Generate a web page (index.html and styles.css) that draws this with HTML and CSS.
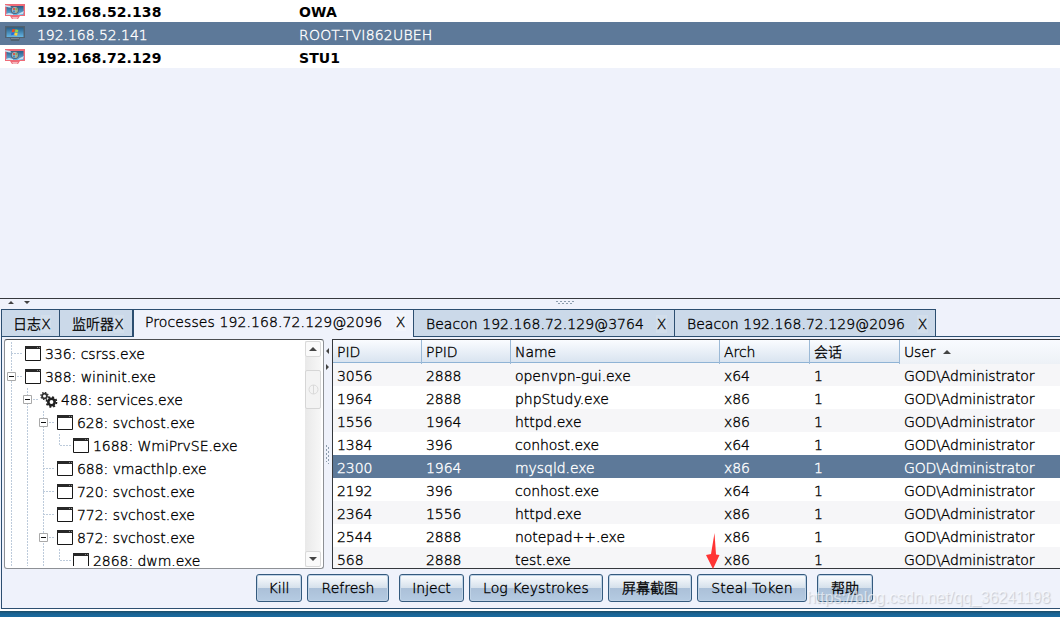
FILE: index.html
```html
<!DOCTYPE html>
<html lang="zh">
<head>
<meta charset="utf-8">
<title>Processes</title>
<link rel="stylesheet" href="styles.css">
</head>
<body>
<svg class="defs" width="0" height="0">
  <defs>
    <linearGradient id="sky" x1="0" y1="0" x2="0" y2="1"><stop offset="0" stop-color="#285d88"/><stop offset="1" stop-color="#65b5e3"/></linearGradient>
    <symbol id="owned" viewBox="0 0 20 16">
      <path d="M0 0h20v12h-5l-2 3H7l-2-3H0z" fill="#ee6b78"/>
      <path d="M7 13h6l-1 2H8z" fill="#f4b6bd"/>
      <path d="M1.500 2h17v9h-17z" fill="url(#sky)"/>
      <path d="M0 1l5 1 2 1.500-3 0-4-1zM19 7l-4 2-3 2 6-1zM1 10l3-1 4 1v1H1z" fill="#c9e2f2"/>
      <circle cx="9.800" cy="6" r="4.100" fill="#536579"/><circle cx="9.800" cy="6" r="3" fill="#a0b6c4"/>
      <path d="M8 4l2 0v2H8z" fill="#d75c4c"/><path d="M10.400 4h2v2h-2z" fill="#80a864"/><path d="M8 6.400h2v2H8z" fill="#408ac1"/><path d="M10.400 6.400h2v2h-2z" fill="#a9b07b"/>
    </symbol>
    <symbol id="windows" viewBox="0 0 20 16">
      <path d="M0 0h20v12h-5l-1 3H6l-1-3H0z" fill="#506170"/>
      <path d="M1.500 1.500h17v9.500h-17z" fill="url(#sky)"/>
      <path d="M6 12h8v1H6z" fill="#778591"/>
      <path d="M7.300 3.200L10 3l-.6 3-2.700.3z" fill="#f04b27"/><path d="M10.400 3.300l3 .7-.6 2.500-2.800-.5z" fill="#95d545"/><path d="M6.500 6.700L9.200 6.400l-.6 2.400-2.600.4z" fill="#2469dc"/><path d="M9.800 6.500l2.800.5-.6 2.700-2.700-.5z" fill="#ffd235"/>
    </symbol>
    <symbol id="win" viewBox="0 0 16 15">
      <path d="M.5.5h15v14H.5z" fill="#fff" stroke="#181818"/><path d="M0 0h16v3H0z" fill="#282828"/><path d="M12 1h1v1h-1zM14 1h1v1h-1z" fill="#888"/>
    </symbol>
    <symbol id="gears" viewBox="0 0 18 16">
      <circle cx="4.500" cy="4" r="2.400" fill="none" stroke="#333" stroke-width="1.800"/>
      <circle cx="4.500" cy="4" r="3.600" fill="none" stroke="#333" stroke-width="1.300" stroke-dasharray="1.400 1.430"/>
      <circle cx="11.500" cy="10" r="3.200" fill="none" stroke="#202020" stroke-width="2.600"/>
      <circle cx="11.500" cy="10" r="5" fill="none" stroke="#202020" stroke-width="1.700" stroke-dasharray="2 1.930"/>
    </symbol>
  </defs>
</svg>

<main class="app">
  <section class="targets">
    <div class="target owned"><svg><use href="#owned"/></svg><b>192.168.52.138</b><b>OWA</b></div>
    <div class="target selected"><svg><use href="#windows"/></svg><span>192.168.52.141</span><span class="host">ROOT-TVI862UBEH</span></div>
    <div class="target owned"><svg><use href="#owned"/></svg><b>192.168.72.129</b><b>STU1</b></div>
  </section>

  <div class="divider">
    <svg width="1060" height="10"><path d="M8 5h6l-3-3z M24 2h6l-3 3z" fill="#424242"/><path d="M556 2.500h18M558 4.500h15" stroke="#8c9dad" stroke-dasharray="2 2"/></svg>
  </div>

  <section class="workspace">
    <nav class="tabs">
      <div class="tab log cjk">日志<i>X</i></div>
      <div class="tab listen cjk">监听器<i>X</i></div>
      <div class="tab current"><span>Processes 192.168.72.129@2096</span><i>X</i></div>
      <div class="tab beacon"><span>Beacon 192.168.72.129@3764</span><i>X</i></div>
      <div class="tab beacon"><span>Beacon 192.168.72.129@2096</span><i>X</i></div>
      <div class="tab-fill"></div>
    </nav>

    <div class="panes">
      <div class="tree">
        <div class="nodes">
          <svg class="guides" width="100" height="227">
            <g fill="none" stroke="#bdcbdb" stroke-dasharray="2 1">
              <path d="M6.500 2V226M22.500 48V226M38.500 71V226M54.500 94v11M54.500 209v11"/>
              <path d="M6 13.500h11M6 36.500h11M22 59.500h11M38 82.500h11M55 105.500h11M38 128.500h11M38 151.500h11M38 174.500h11M38 197.500h11M55 220.500h11"/>
            </g>
            <g fill="#fff" stroke="#a9a9a9"><path d="M2.500 32.500h8v8h-8zM18.500 55.500h8v8h-8zM34.500 78.500h8v8h-8zM34.500 193.500h8v8h-8z"/></g>
            <path d="M4 36.500h5M20 59.500h5M36 82.500h5M36 197.500h5" stroke="#111"/>
          </svg>
          <div class="node d1"><svg><use href="#win"/></svg><span>336: csrss.exe</span></div>
          <div class="node d1"><svg><use href="#win"/></svg><span>388: wininit.exe</span></div>
          <div class="node d2 service"><svg><use href="#gears"/></svg><span>488: services.exe</span></div>
          <div class="node d3"><svg><use href="#win"/></svg><span>628: svchost.exe</span></div>
          <div class="node d4"><svg><use href="#win"/></svg><span>1688: WmiPrvSE.exe</span></div>
          <div class="node d3"><svg><use href="#win"/></svg><span>688: vmacthlp.exe</span></div>
          <div class="node d3"><svg><use href="#win"/></svg><span>720: svchost.exe</span></div>
          <div class="node d3"><svg><use href="#win"/></svg><span>772: svchost.exe</span></div>
          <div class="node d3"><svg><use href="#win"/></svg><span>872: svchost.exe</span></div>
          <div class="node d4"><svg><use href="#win"/></svg><span>2868: dwm.exe</span></div>
        </div>
        <div class="scroll">
          <div class="step"><svg width="8" height="4"><path d="M0 4h8L4 0z"/></svg></div>
          <div class="thumb"><svg width="11" height="11"><circle cx="5.500" cy="5.500" r="4.500"/><path d="M5.500 1v9"/></svg></div>
          <div class="step"><svg width="8" height="4"><path d="M0 0h8L4 4z"/></svg></div>
        </div>
      </div>
      <div class="splitter"><svg width="8" height="230"><path d="M5 9v6L2 12zM2 25v6l3-3z" fill="#424242"/><path d="M2.500 106v17M4.500 108v17" stroke="#8c9dad" stroke-dasharray="2 2"/></svg></div>
      <div class="processes">
        <div class="row head"><span>PID</span><span>PPID</span><span>Name</span><span>Arch</span><span class="cjk">会话</span><span>User<svg width="8" height="4"><path d="M0 4h8L4 0z" fill="#444"/></svg></span></div>
        <div class="row"><span>3056</span><span>2888</span><span>openvpn-gui.exe</span><span>x64</span><span>1</span><span>GOD\Administrator</span></div>
        <div class="row"><span>1964</span><span>2888</span><span>phpStudy.exe</span><span>x86</span><span>1</span><span>GOD\Administrator</span></div>
        <div class="row"><span>1556</span><span>1964</span><span>httpd.exe</span><span>x86</span><span>1</span><span>GOD\Administrator</span></div>
        <div class="row"><span>1384</span><span>396</span><span>conhost.exe</span><span>x64</span><span>1</span><span>GOD\Administrator</span></div>
        <div class="row selected"><span>2300</span><span>1964</span><span>mysqld.exe</span><span>x86</span><span>1</span><span>GOD\Administrator</span></div>
        <div class="row"><span>2192</span><span>396</span><span>conhost.exe</span><span>x64</span><span>1</span><span>GOD\Administrator</span></div>
        <div class="row"><span>2364</span><span>1556</span><span>httpd.exe</span><span>x86</span><span>1</span><span>GOD\Administrator</span></div>
        <div class="row"><span>2544</span><span>2888</span><span>notepad++.exe</span><span>x86</span><span>1</span><span>GOD\Administrator</span></div>
        <div class="row"><span>568</span><span>2888</span><span>test.exe</span><span>x86</span><span>1</span><span>GOD\Administrator</span></div>
      </div>
    </div>

    <div class="actions">
      <button class="kill">Kill</button>
      <button class="refresh">Refresh</button>
      <button class="inject">Inject</button>
      <button class="log-keys">Log Keystrokes</button>
      <button class="shot cjk">屏幕截图</button>
      <button class="steal">Steal Token</button>
      <button class="help cjk">帮助</button>
    </div>
  </section>
  <div class="desktop"></div>
  <svg class="arrow" width="14" height="36"><path d="M8.500 0L10 21.500l3.500.5L7 36 0 22l5-1z" fill="#ff3434"/></svg>
  <div class="watermark">https://blog.csdn.net/qq_36241198</div>
</main>
</body>
</html>
```

FILE: styles.css
```css
* { box-sizing: border-box; }
body { margin: 0; width: 1060px; height: 617px; overflow: hidden; }
svg { display: block; flex: none; }
.defs { position: absolute; }
i { font-style: normal; }
.app {
  position: relative; width: 1060px; height: 617px;
  display: flex; flex-direction: column;
  background: #eff2fb; color: #000;
  font: 200 14px/23px "DejaVu Sans", "DejaVu Sans Light", "Noto Sans CJK SC", sans-serif;
  -webkit-text-stroke: .35px currentColor;
  white-space: nowrap;
}
.cjk { font-family: "DejaVu Sans", "DejaVu Sans Light", "Noto Sans CJK SC", sans-serif; }

.targets { height: 298px; }
.target { height: 23px; display: grid; grid-template-columns: 32px 262px 1fr; padding-left: 5px; background: #fff; line-height: 26px; }
.target:first-child { height: 22px; line-height: 24px; }
.target svg { width: 20px; height: 16px; margin-top: 4px; }
.target.selected svg { margin-top: 4px; }
.target b { font-weight: 700; letter-spacing: .1px; -webkit-text-stroke: 0; }
.target span { letter-spacing: -.05px; }
.target .host { letter-spacing: .2px; }
.selected, .row.selected { background: #5d7999; color: #fff; }

.divider { height: 11px; border-top: 1px solid #35383d; }

.workspace { height: 300px; margin-left: 1px; border-left: 1px solid #2c4e70; border-bottom: 1px solid #2c4e70; }
.tabs { display: flex; height: 28px; }
.tab {
  display: flex; align-items: center; justify-content: space-between;
  border: solid #2c4e70; border-width: 1px 1px 1px 0; background: #cbd9e9;
  padding: 2px 8px 0 11px;
}
.tab i { width: 11px; text-align: center; background: #d2deeb; line-height: 18px; }
.tab.log { width: 58px; }
.tab.listen { width: 74px; padding-left: 12px; border-right-width: 2px; }
.tab.current { width: 280px; background: #eff2fb; border-bottom: 0; padding: 0 7px 3px 11px; }
.tab.current i { background: #f3f5fb; }
.tab span { letter-spacing: .1px; }
.tab.beacon { width: 261px; padding: 2px 7px 0 12px; }
.tab.beacon span { letter-spacing: .04px; }
.tab-fill { flex: 1; border-bottom: 1px solid #2c4e70; }

.panes { display: flex; height: 232px; padding: 2px 0 0 2px; }
.tree { width: 320px; height: 230px; border: 1px solid #8d9095; border-top-color: #4b4e52; border-radius: 3px; background: #fff; display: flex; overflow: hidden; }
.nodes { position: relative; width: 300px; height: 226px; overflow: hidden; padding-top: 2px; }
.guides { position: absolute; left: 0; top: 0; }
.node { position: relative; height: 23px; display: flex; align-items: center; gap: 4px; letter-spacing: -.05px; }
.node span { padding-top: 2px; }
.node svg { width: 16px; height: 15px; }
.node.service svg { width: 18px; height: 16px; }
.node.service { gap: 3px; }
.d1 { padding-left: 20px; }
.d2 { padding-left: 35px; }
.d3 { padding-left: 52px; }
.d4 { padding-left: 68px; }
.scroll { width: 16px; height: 226px; margin-top: 1px; display: flex; flex-direction: column; background: linear-gradient(90deg, #e9e9e9, #f7f7f7); }
.step { height: 16px; border: 1px solid #d9d9d9; border-radius: 2px; background: #fafafa; display: grid; place-items: center; fill: #444; }
.step:last-child { margin-top: auto; }
.thumb { height: 39px; margin-top: 13px; border: 1px solid #d6d6d6; border-radius: 2px; background: #f3f3f3; display: grid; place-items: center; }
.thumb svg { fill: none; stroke: #d9d9d9; }
.splitter { width: 8px; }
.processes { flex: 1; height: 230px; border: solid #35383d; border-width: 1px 0 1px 1px; background: #fff; overflow: hidden; }
.row { display: grid; grid-template-columns: 89px 89px 209px 90px 90px 1fr; height: 23px; line-height: 26px; background: #f6f6f8; }
.row:nth-child(odd) { background: #fff; }
.row span { padding-left: 4px; letter-spacing: -.05px; }
.row span:nth-child(6) { letter-spacing: -.15px; }
.row.selected { background: #5d7999; }
.row.head { background: linear-gradient(#fafcff, #d9e4f0); border-bottom: 1px solid #8fb3d5; line-height: 24px; }
.head span { border-right: 1px solid #9bb9d6; }
.head span:last-child { display: flex; align-items: center; gap: 8px; border: 0; background: linear-gradient(#f9fbff, #edf1f6); }

.actions { display: flex; height: 39px; padding: 5px 0 0 254px; }
button {
  height: 28px; padding: 0; margin: 0 5px 0 0; font: inherit; line-height: 24px; color: #000;
  border: 1px solid #345a7e; border-radius: 3px; box-shadow: inset 0 0 0 1px #c0d3e6;
  background: linear-gradient(#fcfdfe 0%, #d6e1ec 49%, #abc0d8 50%, #b5cbe2 100%);
}
.kill { width: 46px; }
.refresh { width: 82px; margin-right: 10px; }
.inject { width: 65px; }
.log-keys { width: 134px; letter-spacing: .08px; }
.shot { width: 84px; }
.steal { width: 110px; margin-right: 10px; letter-spacing: .15px; }
.help { width: 56px; }

.desktop { height: 8px; border-top: 2px solid #fff; background: linear-gradient(#1c4d67 0, #1a6291 40%, #1a6b9f); }
.arrow { position: absolute; left: 706px; top: 533px; }
.watermark { position: absolute; left: 807px; top: 586px; font: 16px/24px "Liberation Sans", sans-serif; letter-spacing: -.03px; color: rgba(255,255,255,.6); text-shadow: 1px 1px 1px rgba(120,125,135,.35); -webkit-text-stroke: 0; }
```
